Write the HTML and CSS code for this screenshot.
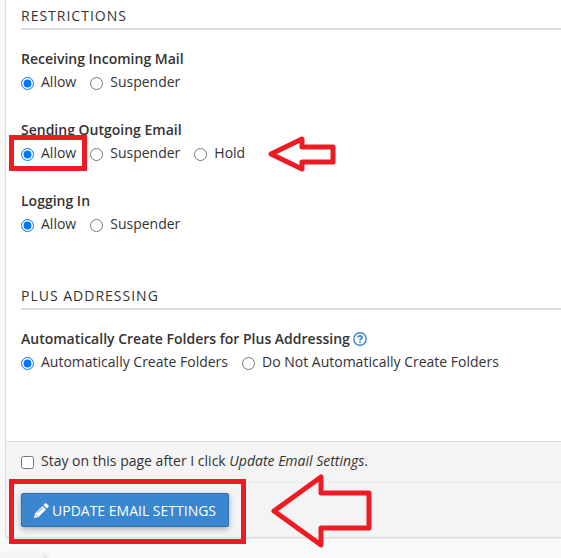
FILE: index.html
```html
<!DOCTYPE html>
<html lang="en">
<head>
  <meta charset="UTF-8">
  <title>Update Email Settings</title>
  <link rel="stylesheet" href="styles.css">
</head>
<body>
  <form class="panel">
    <div class="panel-body">
      <section>
        <h2>Restrictions</h2>
        <fieldset>
          <legend>Receiving Incoming Mail</legend>
          <div class="options">
            <label><input type="radio" name="incoming" checked>Allow</label>
            <label><input type="radio" name="incoming">Suspender</label>
          </div>
        </fieldset>
        <fieldset>
          <legend>Sending Outgoing Email</legend>
          <div class="options">
            <label><input type="radio" name="outgoing" checked>Allow</label>
            <label><input type="radio" name="outgoing">Suspender</label>
            <label><input type="radio" name="outgoing">Hold</label>
            <span class="mark mark-option"></span>
            <svg class="arrow arrow-option" width="69" height="38" viewBox="0 0 69 38">
              <path d="M3 19 L34 4 V12 H65 V27 H34 V34 Z"/>
            </svg>
          </div>
        </fieldset>
        <fieldset>
          <legend>Logging In</legend>
          <div class="options">
            <label><input type="radio" name="login" checked>Allow</label>
            <label><input type="radio" name="login">Suspender</label>
          </div>
        </fieldset>
      </section>

      <section>
        <h2>Plus Addressing</h2>
        <fieldset>
          <legend>
            Automatically Create Folders for Plus Addressing
            <a class="help" href="#" aria-label="Help">
              <svg width="14" height="14" viewBox="0 0 14 14">
                <circle cx="7" cy="7" r="6.200"/>
                <path class="query" d="M5 5.400 C5.300 3.300 9 3.300 9 5.500 C9 6.900 7 6.700 7 8.300 M7 9.400 V11"/>
              </svg>
            </a>
          </legend>
          <div class="options">
            <label><input type="radio" name="folders" checked>Automatically Create Folders</label>
            <label><input type="radio" name="folders">Do Not Automatically Create Folders</label>
          </div>
        </fieldset>
      </section>
    </div>

    <div class="panel-footer">
      <div class="stay">
        <label><input type="checkbox"><span>Stay on this page after I click <em>Update Email Settings</em>.</span></label>
      </div>
      <div class="actions">
        <button type="button">
          <svg width="15" height="15" viewBox="0 0 15 15">
            <path d="M0 15 L1 10.500 L8.500 3 L12 6.500 L4.500 14 Z M9.400 2.100 L11 .5 Q11.700 0 12.400 .5 L14.500 2.600 Q15 3.300 14.500 4 L12.900 5.600 Z"/>
            <path class="nick" d="M1.600 11.400 L3.600 13.400 M3.500 9.800 L8.400 4.900"/>
          </svg>
          Update Email Settings
        </button>
        <span class="mark mark-button"></span>
        <svg class="arrow arrow-button" width="102" height="76" viewBox="0 0 102 76">
          <path d="M3 38 L50 4 V20 H98 V55 H50 V72 Z"/>
        </svg>
      </div>
    </div>
  </form>
  <footer><div class="sidebar"></div></footer>
</body>
</html>
```

FILE: styles.css
```css
* {
  box-sizing: border-box;
}

body {
  margin: 0;
  background: #fafafa;
  color: #333;
  font-family: "Open Sans", sans-serif;
  font-size: 14px;
  overflow-x: hidden;
}

.panel {
  margin-left: 5px;
  border: 1px solid #ddd;
  border-width: 0 0 1px 1px;
  border-bottom-left-radius: 4px;
  background: #fff;
  box-shadow: 0 1px 2px rgba(0, 0, 0, 0.08);
}

.panel-body {
  padding: 6px 0 17px 15px;
}

section {
  padding-bottom: 25px;
}

h2 {
  margin: 0 0 18px;
  padding-bottom: 2px;
  border-bottom: 2px solid #ddd;
  font-size: 14px;
  font-weight: 500;
  line-height: 20px;
  letter-spacing: 1px;
  text-transform: uppercase;
}

fieldset {
  margin: 0;
  padding: 0 0 25px;
  border: 0;
}

legend {
  padding: 0;
  font-weight: 600;
  line-height: 22px;
}

.options {
  display: flex;
  position: relative;
  gap: 14px;
  height: 24px;
}

label {
  display: flex;
  gap: 7px;
  line-height: 24px;
}

input {
  width: 13px;
  height: 13px;
  margin: 7px 0 0;
}

.help svg {
  fill: none;
  stroke: #3a87cf;
  stroke-width: 1.4;
  vertical-align: -2px;
}

.help .query {
  stroke-width: 1.8;
}

.panel-footer {
  border-top: 1px solid #ddd;
  border-bottom-left-radius: 4px;
  background: #f4f4f4;
}

.stay {
  padding: 7px 15px 9px;
  border-bottom: 1px solid #eaeaea;
}

.actions {
  position: relative;
  padding: 10px 15px;
}

button {
  display: flex;
  align-items: center;
  gap: 3px;
  height: 34px;
  padding: 0 12px;
  border: 1px solid #2a6db0;
  border-radius: 2px;
  background: #3a87cf;
  box-shadow: 0 2px 6px rgba(0, 0, 0, 0.3);
  color: #fff;
  font: inherit;
  text-transform: uppercase;
}

button svg {
  fill: #fff;
}

.nick {
  fill: none;
  stroke: #3a87cf;
  stroke-width: 0.8;
}

/* red callouts drawn over the form */
.mark {
  position: absolute;
  border: 5px solid #ed1c24;
  pointer-events: none;
}

.mark-option {
  top: -6px;
  left: -12px;
  width: 78px;
  height: 36px;
}

.mark-button {
  top: -4px;
  left: 3px;
  width: 237px;
  height: 65px;
}

.arrow {
  position: absolute;
  fill: none;
  stroke: #ed1c24;
  stroke-width: 5;
  stroke-linejoin: round;
  pointer-events: none;
}

.arrow-option {
  top: -6px;
  left: 247px;
}

.arrow-button {
  top: -10px;
  left: 265px;
}

footer {
  height: 20px;
  padding-top: 14px;
  overflow: hidden;
}

.sidebar {
  width: 44px;
  height: 40px;
  background: #f4f4f4;
  box-shadow: 2px 3px 5px rgba(0, 0, 0, 0.2);
}
```
